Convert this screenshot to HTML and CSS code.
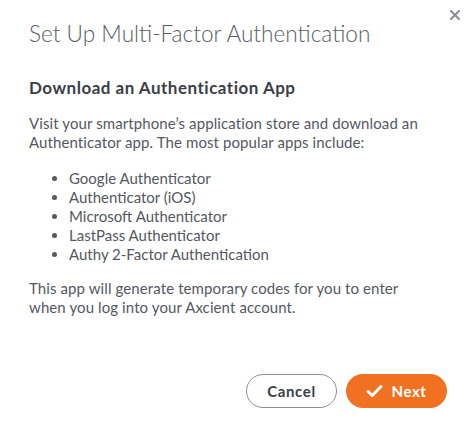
FILE: index.html
```html
<!DOCTYPE html>
<html>
<head>
<meta charset="utf-8">
<link rel="stylesheet" href="styles.css">
</head>
<body>
<div class="modal">
  <button class="close" aria-label="Close">
    <svg width="10" height="10" viewBox="0 0 10 10"><path d="M1 1L9 9M9 1L1 9" stroke="#8a8d96" stroke-width="2" stroke-linecap="square"/></svg>
  </button>
  <h1 class="title">Set Up Multi-Factor Authentication</h1>
  <h2 class="subtitle">Download an Authentication App</h2>
  <p class="text">Visit your smartphone’s application store and download an Authenticator app. The most popular apps include:</p>
  <ul class="apps">
    <li>Google Authenticator</li>
    <li>Authenticator (iOS)</li>
    <li>Microsoft Authenticator</li>
    <li>LastPass Authenticator</li>
    <li>Authy 2-Factor Authentication</li>
  </ul>
  <p class="text">This app will generate temporary codes for you to enter when you log into your Axcient account.</p>
  <div class="actions">
    <button class="btn btn-cancel">Cancel</button>
    <button class="btn btn-next">
      <svg width="17" height="14" viewBox="0 0 17 14"><path d="M2 7.5L6.2 11.5L15 2.5" fill="none" stroke="#fff" stroke-width="3" stroke-linecap="round" stroke-linejoin="round"/></svg>
      Next
    </button>
  </div>
</div>
</body>
</html>
```
FILE: styles.css
```css
html, body {
  margin: 0;
  padding: 0;
  background: #fff;
}
body {
  font-family: Lato, "Liberation Sans", sans-serif;
  color: #555860;
}
.modal {
  position: relative;
  width: 476px;
  height: 437px;
  box-sizing: border-box;
  padding: 19px 29px 0 29px;
}
.close {
  position: absolute;
  top: 10px;
  right: 16px;
  border: 0;
  background: none;
  padding: 0;
  width: 10px;
  height: 10px;
  cursor: pointer;
}
.close svg { display: block; }
.title {
  margin: 0;
  font-size: 22.6px;
  font-weight: 300;
  line-height: 30px;
  color: #5a5d64;
}
.subtitle {
  margin: 29px 0 0;
  font-size: 17px;
  font-weight: 700;
  letter-spacing: 0.5px;
  line-height: 20px;
  color: #3b3e46;
}
.text {
  margin: 16px 0 0;
  max-width: 400px;
  font-size: 15px;
  letter-spacing: 0.1px;
  line-height: 19px;
}
.apps {
  margin: 17px 0 0;
  padding-left: 40px;
  font-size: 15px;
  line-height: 19px;
}
.apps + .text {
  margin-top: 15px;
}
.actions {
  display: flex;
  justify-content: flex-end;
  gap: 9px;
  margin-top: 57px;
}
.btn {
  height: 34px;
  border-radius: 17px;
  font-family: Lato, "Liberation Sans", sans-serif;
  font-size: 15px;
  font-weight: 700;
  letter-spacing: 0.6px;
  display: flex;
  align-items: center;
  justify-content: center;
  box-sizing: border-box;
  cursor: pointer;
}
.btn-cancel {
  width: 91px;
  background: #fff;
  border: 1px solid #8c8f98;
  color: #3b3e46;
}
.btn-next {
  width: 101px;
  background: #f07122;
  border: 0;
  color: #fff;
  gap: 8px;
}
```
